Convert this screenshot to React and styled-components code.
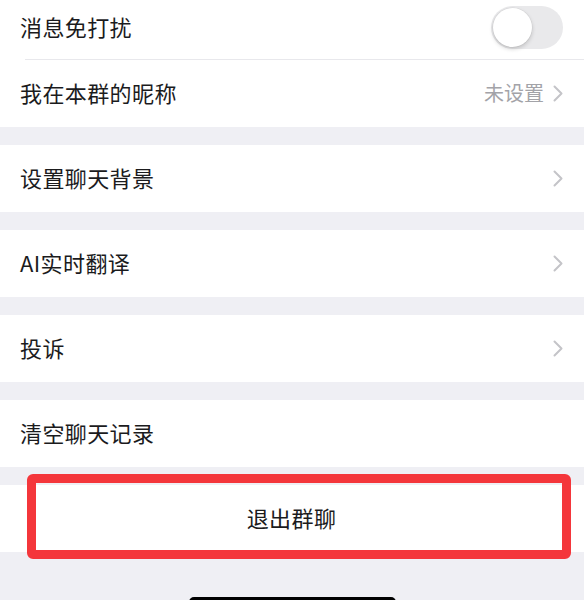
import React from "react";
import styled, { createGlobalStyle } from "styled-components";

const Global = createGlobalStyle`
  html, body { margin: 0; padding: 0; background: #efeff4; }
  body { font-family: "Noto Sans CJK SC", "Noto Sans", sans-serif; -webkit-font-smoothing: antialiased; }
`;

const Page = styled.div`
  width: 584px;
  height: 600px;
  overflow: hidden;
  background: #efeff4;
  display: flex;
  flex-direction: column;
  position: relative;
`;

const Group = styled.section`
  background: #ffffff;
  margin-top: ${(p) => p.$gap}px;
  display: flex;
  flex-direction: column;
  position: relative;
`;

const Row = styled.div`
  height: ${(p) => p.$h || 67}px;
  display: flex;
  align-items: center;
  justify-content: ${(p) => (p.$center ? "center" : "space-between")};
  padding: 0 21px 0 20px;
  box-sizing: border-box;
  position: relative;
  ${(p) =>
    p.$divider
      ? `&::after { content: ""; position: absolute; left: 25px; right: 0; bottom: 0; height: 1px; background: #e8e8ec; }`
      : ""}
`;

const Label = styled.span`
  font-size: 22px;
  letter-spacing: 0.4px;
  color: #1b1b1d;
  line-height: 1;
  transform: translateY(${(p) => p.$dy ?? -2}px);
`;

const Trail = styled.div`
  display: flex;
  align-items: center;
  gap: 9px;
`;

const Value = styled.span`
  font-size: 20px;
  color: #a3a3a8;
  line-height: 1;
  transform: translateY(-1px);
`;

const Track = styled.div`
  width: 72px;
  height: 43px;
  border-radius: 22px;
  background: #e9e9eb;
  display: flex;
  align-items: center;
  padding: 0 2px;
  box-sizing: border-box;
  margin-top: -5px;
`;

const Knob = styled.div`
  width: 39px;
  height: 39px;
  border-radius: 50%;
  background: #ffffff;
  box-shadow: 0 2px 4px rgba(0, 0, 0, 0.18), 0 0 0 0.5px rgba(0, 0, 0, 0.06);
`;

const Highlight = styled.div`
  position: absolute;
  left: 27px;
  right: 13px;
  top: -11px;
  bottom: -7px;
  border: 9px solid #f4363b;
  border-radius: 6px;
  pointer-events: none;
`;

const Footer = styled.div`
  flex: 1;
  display: flex;
  justify-content: center;
  align-items: flex-end;
`;

const HomeBar = styled.div`
  width: 207px;
  height: 10px;
  border-radius: 5px;
  background: #000;
  margin-bottom: -7px;
`;

const Chevron = () => (
  <svg width="10" height="17" viewBox="0 0 10 17" fill="none">
    <polyline points="1.5,1.5 8.5,8.5 1.5,15.5" stroke="#c4c4c8" strokeWidth="2" strokeLinecap="round" strokeLinejoin="round" />
  </svg>
);

const NavRow = ({ label }) => (
  <Row>
    <Label>{label}</Label>
    <Chevron />
  </Row>
);

export default function App() {
  return (
    <>
      <Global />
      <Page>
        <Group $gap={0}>
          <Row $h={60} $divider>
            <Label $dy={-4}>消息免打扰</Label>
            <Track>
              <Knob />
            </Track>
          </Row>
          <Row>
            <Label>我在本群的昵称</Label>
            <Trail>
              <Value>未设置</Value>
              <Chevron />
            </Trail>
          </Row>
        </Group>
        <Group $gap={18}>
          <NavRow label="设置聊天背景" />
        </Group>
        <Group $gap={18}>
          <NavRow label="AI实时翻译" />
        </Group>
        <Group $gap={18}>
          <NavRow label="投诉" />
        </Group>
        <Group $gap={18}>
          <Row>
            <Label>清空聊天记录</Label>
          </Row>
        </Group>
        <Group $gap={18}>
          <Row $center>
            <Label>退出群聊</Label>
          </Row>
          <Highlight />
        </Group>
        <Footer>
          <HomeBar />
        </Footer>
      </Page>
    </>
  );
}
